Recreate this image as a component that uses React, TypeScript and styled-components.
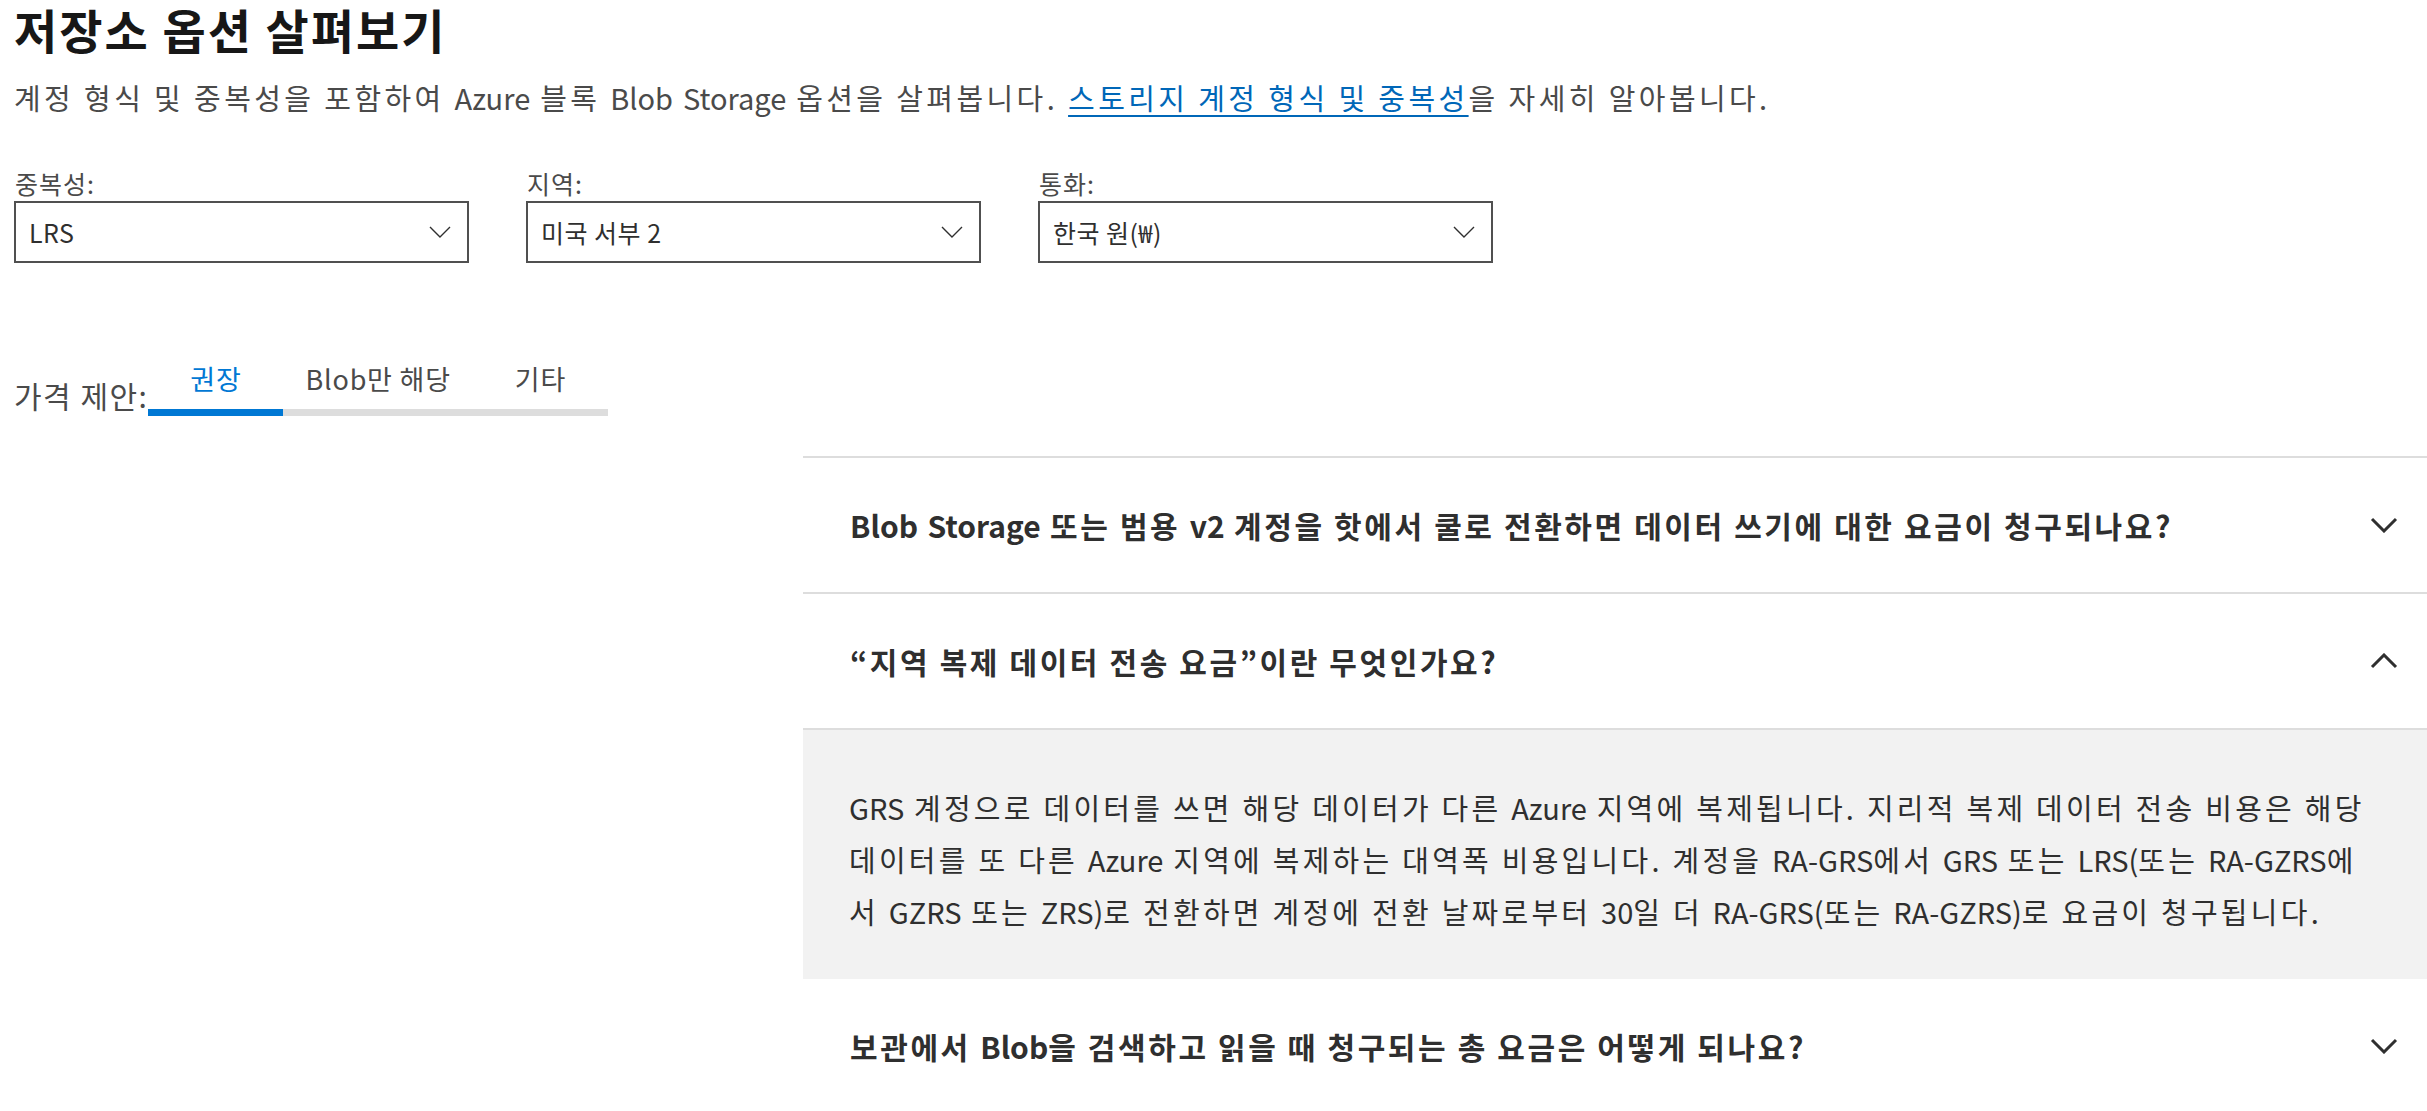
import React, { useState } from 'react';
import styled, { createGlobalStyle } from 'styled-components';

const GlobalStyle = createGlobalStyle`
  html, body {
    margin: 0;
    padding: 0;
    background: #ffffff;
  }
  body {
    font-family: "Noto Sans CJK KR", "Noto Sans", sans-serif;
    color: #2f2f2f;
  }
`;

const filters = [
  { label: '중복성:', value: 'LRS' },
  { label: '지역:', value: '미국 서부 2' },
  { label: '통화:', value: '한국 원(₩)' },
];

const tabs = ['권장', 'Blob만 해당', '기타'];

const faqs = [
  {
    q: 'Blob Storage 또는 범용 v2 계정을 핫에서 쿨로 전환하면 데이터 쓰기에 대한 요금이 청구되나요?',
    a: '',
  },
  {
    q: '“지역 복제 데이터 전송 요금”이란 무엇인가요?',
    a: 'GRS 계정으로 데이터를 쓰면 해당 데이터가 다른 Azure 지역에 복제됩니다. 지리적 복제 데이터 전송 비용은 해당 데이터를 또 다른 Azure 지역에 복제하는 대역폭 비용입니다. 계정을 RA-GRS에서 GRS 또는 LRS(또는 RA-GZRS에서 GZRS 또는 ZRS)로 전환하면 계정에 전환 날짜로부터 30일 더 RA-GRS(또는 RA-GZRS)로 요금이 청구됩니다.',
  },
  {
    q: '보관에서 Blob을 검색하고 읽을 때 청구되는 총 요금은 어떻게 되나요?',
    a: '',
  },
];

// hangul gets wide tracking, latin runs keep their natural spacing
function Mixed({ text }: { text: string }) {
  const parts = text.split(/([A-Za-z0-9()\-.?]+)/);
  return (
    <>
      {parts.map((p, i) =>
        /[A-Za-z0-9]/.test(p) ? <Latin key={i}>{p}</Latin> : p
      )}
    </>
  );
}

function Chevron({ up, thin }: { up?: boolean; thin?: boolean }) {
  if (thin) {
    return (
      <svg width="22" height="12" viewBox="0 0 22 12" fill="none">
        <path d="M1 1 L11 11 L21 1" stroke="#2f2f2f" strokeWidth="1.4" />
      </svg>
    );
  }
  return (
    <svg width="28" height="16" viewBox="0 0 28 16" fill="none">
      <path
        d={up ? 'M2 14 L14 2 L26 14' : 'M2 2 L14 14 L26 2'}
        stroke="#2f2f2f"
        strokeWidth="3"
      />
    </svg>
  );
}

function App() {
  const [active, setActive] = useState(0);
  const [open, setOpen] = useState<number | null>(1);

  return (
    <Page>
      <GlobalStyle />
      <Title>저장소 옵션 살펴보기</Title>
      <Intro>
        <Mixed text="계정 형식 및 중복성을 포함하여 Azure 블록 Blob Storage 옵션을 살펴봅니다. " />
        <IntroLink href="#">스토리지 계정 형식 및 중복성</IntroLink>을 자세히 알아봅니다.
      </Intro>

      <Filters>
        {filters.map((f) => (
          <Field key={f.label}>
            <FieldLabel>{f.label}</FieldLabel>
            <SelectBox>
              <span>{f.value}</span>
              <Chevron thin />
            </SelectBox>
          </Field>
        ))}
      </Filters>

      <TabsRow>
        <TabsLabel>가격 제안:</TabsLabel>
        <TabList>
          {tabs.map((t, i) => (
            <Tab key={t} $active={i === active} onClick={() => setActive(i)}>
              {t}
            </Tab>
          ))}
        </TabList>
      </TabsRow>

      <Columns>
        <div />
        <Accordion>
          {faqs.map((f, i) => (
            <Item key={f.q}>
              <Header onClick={() => setOpen(open === i ? null : i)}>
                <span>
                  <Mixed text={f.q} />
                </span>
                <Chevron up={open === i} />
              </Header>
              {open === i && f.a && (
                <Panel>
                  <Mixed text={f.a} />
                </Panel>
              )}
            </Item>
          ))}
        </Accordion>
      </Columns>
    </Page>
  );
}

const Page = styled.div`
  padding: 0 0 0 14px;
`;

const Latin = styled.span`
  letter-spacing: 0;
`;

const Title = styled.h1`
  margin: 0;
  font-size: 47px;
  line-height: 58px;
  font-weight: 700;
  letter-spacing: 2px;
  color: #171717;
`;

const Intro = styled.p`
  margin: 19px 0 0;
  font-size: 29px;
  line-height: 40px;
  letter-spacing: 3.4px;
  color: #4a4a4a;
`;

const IntroLink = styled.a`
  color: #0067b8;
  text-decoration: underline;
  text-underline-offset: 5px;
  text-decoration-thickness: 2px;
`;

const Filters = styled.div`
  display: flex;
  gap: 57px;
  margin-top: 49px;
`;

const Field = styled.div`
  display: flex;
  flex-direction: column;
  width: 455px;
`;

const FieldLabel = styled.label`
  font-size: 25px;
  line-height: 34px;
  letter-spacing: 1px;
  color: #4a4a4a;
  margin-bottom: 1px;
  padding-left: 1px;
`;

const SelectBox = styled.div`
  box-sizing: border-box;
  height: 62px;
  border: 2px solid #505050;
  display: flex;
  align-items: center;
  justify-content: space-between;
  padding: 0 16px 0 13px;
  font-size: 25px;
  letter-spacing: 0.5px;
  color: #2f2f2f;
`;

const TabsRow = styled.div`
  display: flex;
  align-items: flex-end;
  margin-top: 98px;
`;

const TabsLabel = styled.span`
  font-size: 30px;
  line-height: 40px;
  letter-spacing: 1.5px;
  color: #4a4a4a;
  margin-bottom: 1px;
`;

const TabList = styled.div`
  display: flex;
`;

const Tab = styled.button<{ $active: boolean }>`
  font-family: inherit;
  min-width: 135px;
  background: none;
  border: none;
  border-bottom: 7px solid ${(p) => (p.$active ? '#0078d4' : '#dddddd')};
  padding: 0 22px 12px;
  font-size: 27px;
  line-height: 36px;
  letter-spacing: 0.8px;
  text-align: center;
  color: ${(p) => (p.$active ? '#0078d4' : '#4a4a4a')};
  cursor: pointer;
`;

const Columns = styled.div`
  display: grid;
  grid-template-columns: 789px 1fr;
  margin-top: 40px;
`;

const Accordion = styled.div`
  border-top: 2px solid #dddddd;
`;

const Item = styled.div``;

const Header = styled.div`
  box-sizing: border-box;
  height: 136px;
  display: flex;
  align-items: center;
  justify-content: space-between;
  padding: 0 29px 0 47px;
  border-bottom: 2px solid #dddddd;
  font-size: 30px;
  font-weight: 700;
  letter-spacing: 2.6px;
  color: #2f2f2f;
  cursor: pointer;
  ${Item}:last-child & {
    border-bottom-color: transparent;
  }
`;

const Panel = styled.div`
  background: #f2f2f2;
  padding: 51px 44px 42px 46px;
  font-size: 29px;
  line-height: 52px;
  letter-spacing: 3.25px;
  color: #2f2f2f;
`;

export default App;
